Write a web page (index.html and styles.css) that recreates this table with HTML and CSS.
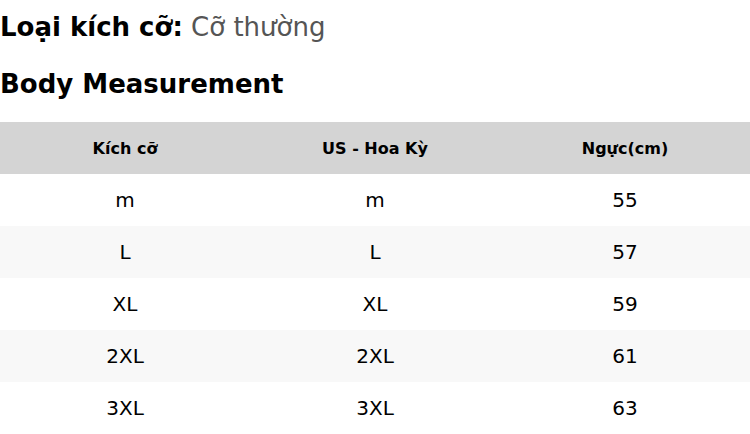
FILE: index.html
```html
<!DOCTYPE html>
<html lang="vi">
<head>
<meta charset="utf-8">
<link rel="stylesheet" href="styles.css">
</head>
<body>
<div class="page">
  <div class="size-type"><span class="label">Loại kích cỡ:</span> <span class="value">Cỡ thường</span></div>
  <h2 class="title">Body Measurement</h2>
  <table class="chart">
    <thead>
      <tr><th>Kích cỡ</th><th>US - Hoa Kỳ</th><th>Ngực(cm)</th></tr>
    </thead>
    <tbody>
      <tr><td>m</td><td>m</td><td>55</td></tr>
      <tr><td>L</td><td>L</td><td>57</td></tr>
      <tr><td>XL</td><td>XL</td><td>59</td></tr>
      <tr><td>2XL</td><td>2XL</td><td>61</td></tr>
      <tr><td>3XL</td><td>3XL</td><td>63</td></tr>
    </tbody>
  </table>
</div>
</body>
</html>
```
FILE: styles.css
```css
html, body {
  margin: 0;
  padding: 0;
  background: #fff;
}
.page {
  width: 750px;
  font-family: "DejaVu Sans", sans-serif;
  color: #000;
}
.size-type {
  font-size: 26px;
  line-height: 30px;
  padding-top: 12px;
  height: 30px;
}
.size-type .label {
  font-weight: bold;
}
.size-type .value {
  color: #555;
}
.title {
  margin: 0;
  font-size: 26px;
  line-height: 30px;
  font-weight: bold;
  padding-top: 27px;
  height: 30px;
}
.chart {
  margin-top: 23px;
  width: 750px;
  border-collapse: collapse;
  table-layout: fixed;
}
.chart th {
  background: #d4d4d4;
  height: 52px;
  padding: 0;
  font-size: 16px;
  font-weight: bold;
  text-align: center;
}
.chart td {
  height: 52px;
  padding: 0;
  font-size: 20px;
  text-align: center;
}
.chart tbody tr:nth-child(even) td {
  background: #f8f8f8;
}
```
